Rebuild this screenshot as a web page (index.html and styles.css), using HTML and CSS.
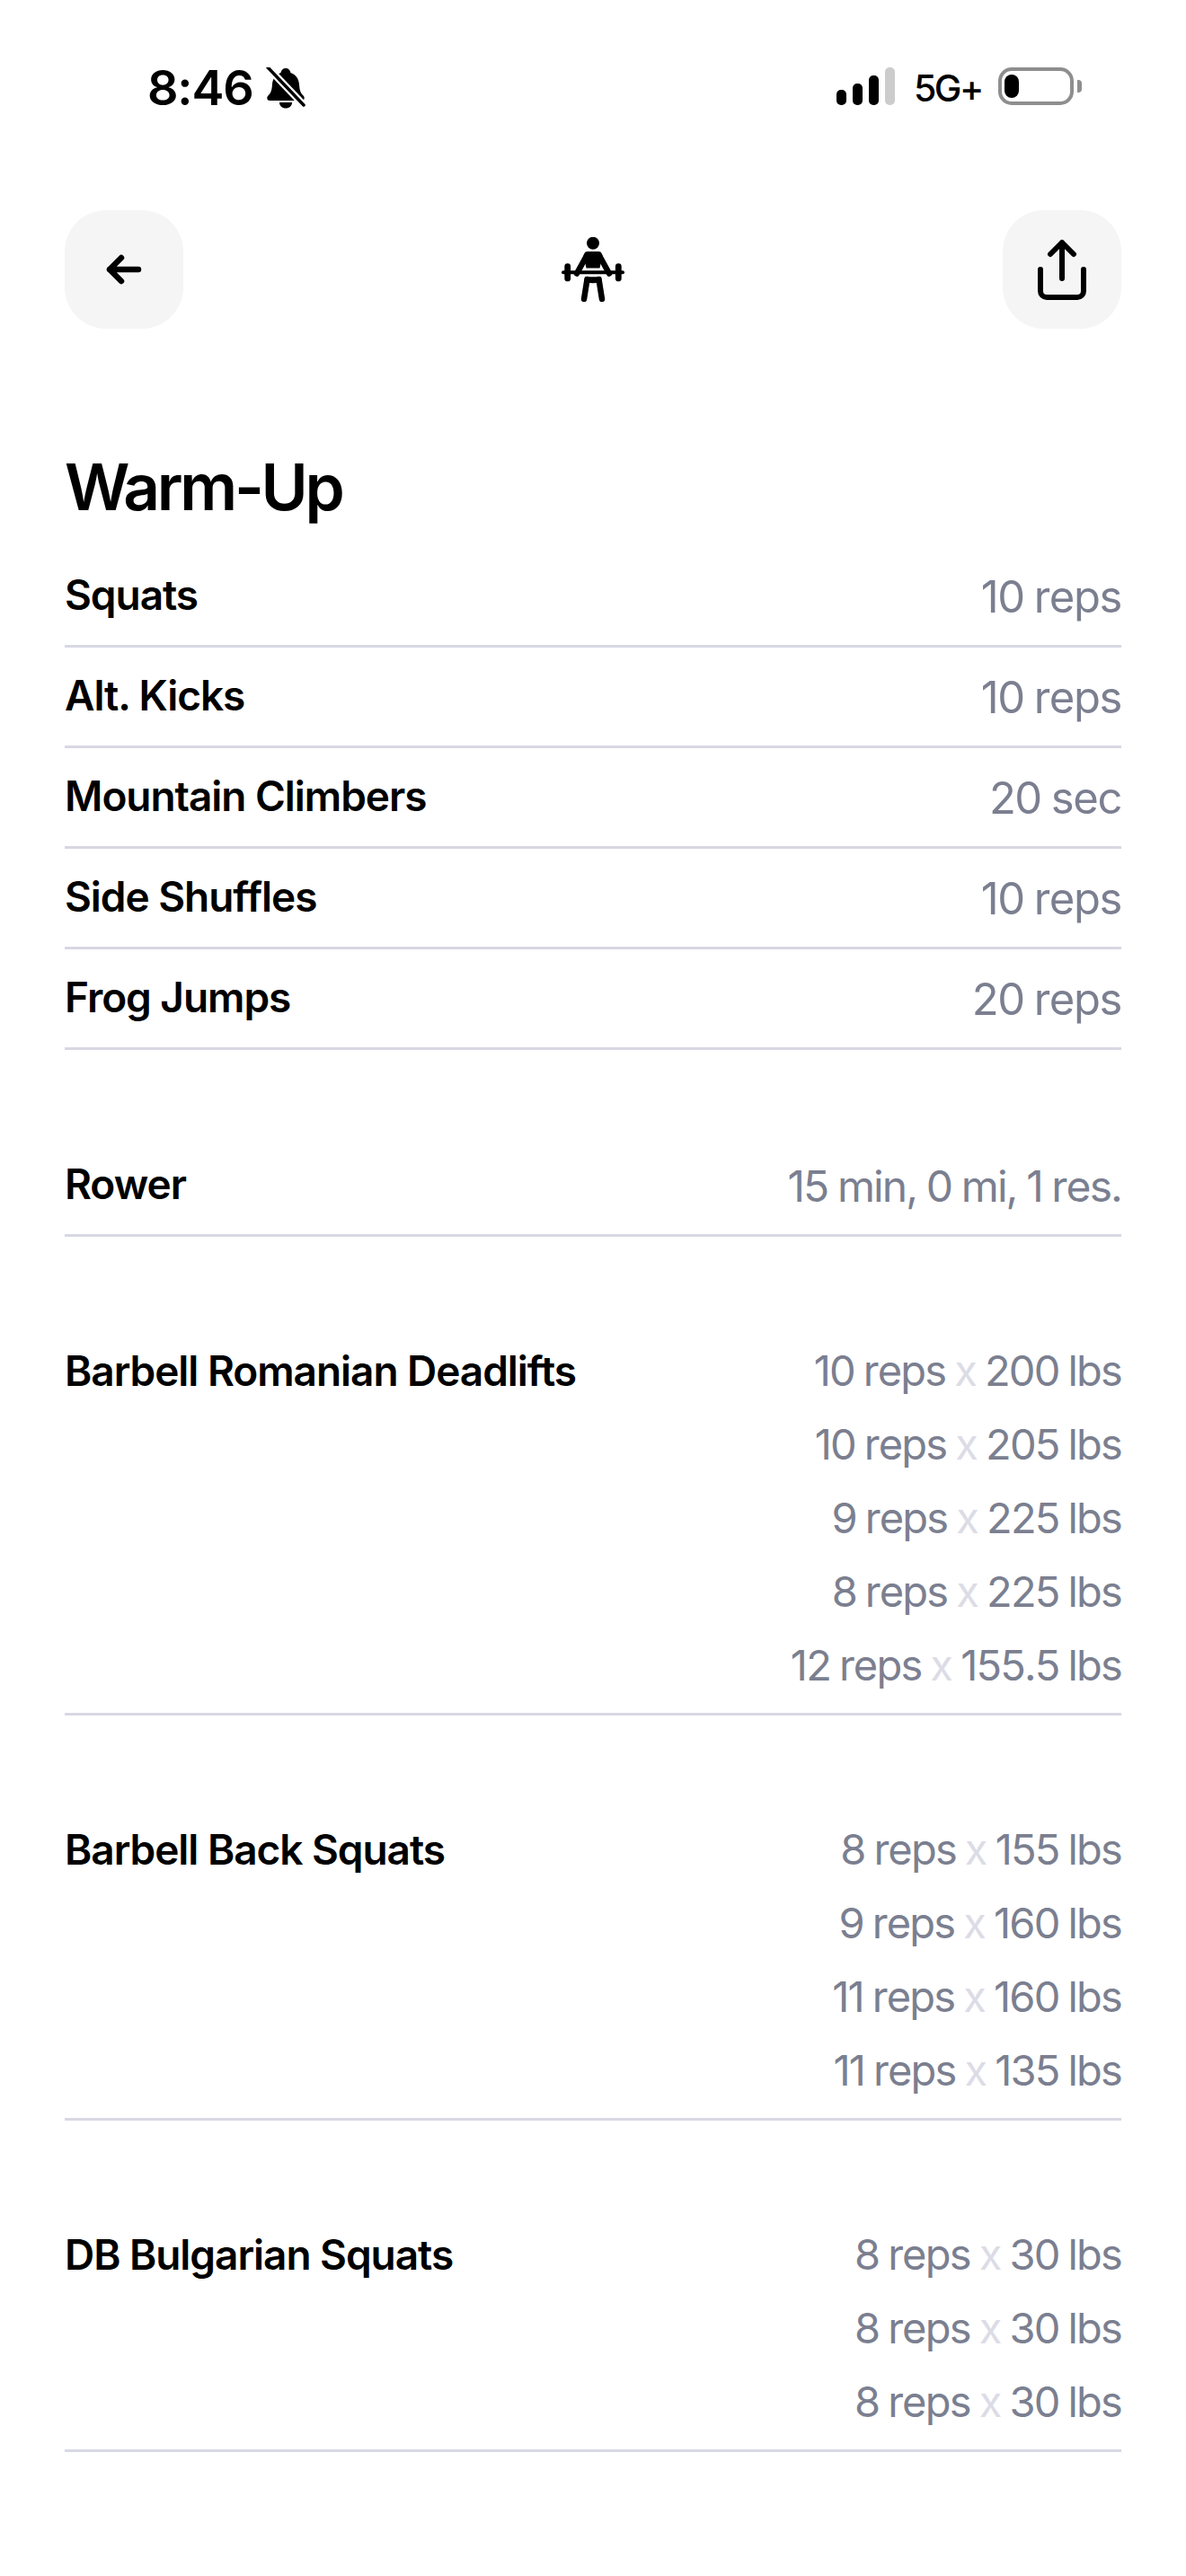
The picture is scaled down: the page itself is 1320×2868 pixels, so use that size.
FILE: index.html
```html
<!DOCTYPE html>
<html lang="en">
<head>
<meta charset="utf-8">
<title>Workout</title>
<link rel="stylesheet" href="styles.css">
</head>
<body>
<div class="status">
  <div class="status-left">
    <span class="time">8:46</span>
    <svg class="bell" viewBox="0 0 44 46" width="44" height="46">
      <path d="M22 1c3 0 5 2 5.500 5 6 2 9 7 9.500 13 .5 6 1 9 5 13 1.500 2 .5 5-2 5H4c-2.500 0-3.500-3-2-5 4-4 4.500-7 5-13 .3-6 3.500-11 9.500-13C17 3 19 1 22 1z" fill="#000"/>
      <path d="M15 39h14c0 4-3 6.500-7 6.500S15 43 15 39z" fill="#000"/>
      <path d="M2 0l42 44" stroke="#fff" stroke-width="8" fill="none"/>
      <path d="M2 0l40 42" stroke="#000" stroke-width="3.500" stroke-linecap="round" fill="none"/>
    </svg>
  </div>
  <div class="status-right">
    <div class="signal">
      <i class="bar b1"></i><i class="bar b2"></i><i class="bar b3"></i><i class="bar b4"></i>
    </div>
    <span class="net">5G+</span>
    <div class="battery"><div class="cell"></div></div>
    <div class="tip"></div>
  </div>
</div>

<nav class="nav">
  <button class="nav-btn" aria-label="Back">
    <svg viewBox="0 0 40 34" width="40" height="34"><path d="M4 17h32M17 4L4 17l13 13" fill="none" stroke="#000" stroke-width="6.500" stroke-linecap="round" stroke-linejoin="round"/></svg>
  </button>
  <svg class="lifter" viewBox="0 0 72 72" width="72" height="72">
    <circle cx="36" cy="6.700" r="7" fill="#000"/>
    <path d="M29.500 16h13c1.500 0 2.500.8 3 2l1 2.500-3 14H28.500l-3-14 1-2.500c.5-1.200 1.500-2 3-2z" fill="#000"/>
    <path d="M29 20.500L18 40.500M43 20.500L54 40.500" fill="none" stroke="#000" stroke-width="6.500" stroke-linecap="round"/>
    <rect x="1" y="37.300" width="70" height="4" rx="2" fill="#000"/>
    <rect x="4.300" y="29.300" width="6.800" height="20" rx="3.400" fill="#000"/>
    <rect x="60.900" y="29.300" width="6.800" height="20" rx="3.400" fill="#000"/>
    <path d="M27 44.300h18l1 6.500-10 .5-10-.5z" fill="#000"/>
    <path d="M29.500 47L26 69M42.500 47L46 69" fill="none" stroke="#000" stroke-width="6.500" stroke-linecap="round"/>
  </svg>
  <button class="nav-btn" aria-label="Share">
    <svg viewBox="0 0 56 68" width="56" height="68"><path d="M28 4v40M15 17L28 4l13 13" fill="none" stroke="#000" stroke-width="6" stroke-linecap="round" stroke-linejoin="round"/><path d="M4 34v24c0 4 3 7 7 7h34c4 0 7-3 7-7V34" fill="none" stroke="#000" stroke-width="6" stroke-linecap="round"/></svg>
  </button>
</nav>

<main class="content">
  <h1 class="title">Warm-Up</h1>
  <section class="group warm">
    <div class="row single"><div class="name">Squats</div><div class="vals"><div class="val">10 reps</div></div></div>
    <div class="row single"><div class="name">Alt. Kicks</div><div class="vals"><div class="val">10 reps</div></div></div>
    <div class="row single"><div class="name">Mountain Climbers</div><div class="vals"><div class="val">20 sec</div></div></div>
    <div class="row single"><div class="name">Side Shuffles</div><div class="vals"><div class="val">10 reps</div></div></div>
    <div class="row single"><div class="name">Frog Jumps</div><div class="vals"><div class="val">20 reps</div></div></div>
  </section>
  <section class="group">
    <div class="row single cardio"><div class="name">Rower</div><div class="vals"><div class="val">15 min, 0 mi, 1 res.</div></div></div>
  </section>
  <section class="group">
    <div class="row"><div class="name">Barbell Romanian Deadlifts</div><div class="vals">
      <div class="val">10 reps <span class="x">x</span> 200 lbs</div>
      <div class="val">10 reps <span class="x">x</span> 205 lbs</div>
      <div class="val">9 reps <span class="x">x</span> 225 lbs</div>
      <div class="val">8 reps <span class="x">x</span> 225 lbs</div>
      <div class="val">12 reps <span class="x">x</span> 155.5 lbs</div>
    </div></div>
  </section>
  <section class="group">
    <div class="row"><div class="name">Barbell Back Squats</div><div class="vals">
      <div class="val">8 reps <span class="x">x</span> 155 lbs</div>
      <div class="val">9 reps <span class="x">x</span> 160 lbs</div>
      <div class="val">11 reps <span class="x">x</span> 160 lbs</div>
      <div class="val">11 reps <span class="x">x</span> 135 lbs</div>
    </div></div>
  </section>
  <section class="group">
    <div class="row"><div class="name">DB Bulgarian Squats</div><div class="vals">
      <div class="val">8 reps <span class="x">x</span> 30 lbs</div>
      <div class="val">8 reps <span class="x">x</span> 30 lbs</div>
      <div class="val">8 reps <span class="x">x</span> 30 lbs</div>
    </div></div>
  </section>
</main>
</body>
</html>
```
FILE: styles.css
```css
* { box-sizing: border-box; }
html, body { margin: 0; padding: 0; background: #fff; }
body { width: 1320px; font-family: Inter, "Liberation Sans", sans-serif; color: #000; }

.status { height: 234px; padding: 75px 0 0 164px; display: flex; justify-content: space-between; align-items: flex-start; }
.status-left { display: flex; align-items: center; gap: 14px; height: 46px; }
.time { font-size: 54px; line-height: 46px; font-weight: 600; letter-spacing: -1.2px; }
.bell { display: block; }
.status-right { display: flex; align-items: flex-end; height: 42px; padding-right: 116px; }
.signal { display: flex; align-items: flex-end; gap: 7px; height: 42px; }
.bar { display: block; width: 11px; background: #000; border-radius: 5px; }
.b1 { height: 17px; }
.b2 { height: 24px; }
.b3 { height: 33px; }
.b4 { height: 42px; background: #ccc; }
.net { width: 74px; height: 42px; margin-left: 21px; font-size: 41px; line-height: 46px; font-weight: 500; letter-spacing: -2.500px; white-space: nowrap; }
.battery { width: 84px; height: 42px; margin-left: 20px; border: 4px solid #8e8e8e; border-radius: 15px; padding: 4px 3px; }
.cell { width: 16px; height: 26px; background: #000; border-radius: 8px; }
.tip { width: 5px; height: 14px; margin: 0 0 14px 4px; background: #8e8e8e; border-radius: 0 4px 4px 0; }

.nav { display: flex; justify-content: space-between; align-items: center; padding: 0 72px; height: 132px; }
.nav-btn { width: 132px; height: 132px; border: 0; padding: 0; background: #f5f5f5; border-radius: 46px; display: flex; align-items: center; justify-content: center; }
.lifter { display: block; }

.content { padding: 0 72px; }
.title { margin: 0; padding: 136px 0 27px; font-size: 71px; line-height: 80px; font-weight: 600; letter-spacing: -3.3px; }
.group { margin-top: 96px; }
.warm { margin-top: 0; }
.row { display: flex; justify-content: space-between; align-items: flex-start; padding: 12px 0 12px; border-bottom: 3px solid #d8d8e4; }
.name { font-size: 46px; line-height: 82px; font-weight: 600; letter-spacing: -1.05px; }
.vals { text-align: right; }
.val { font-size: 47px; line-height: 82px; color: #7b7f90; letter-spacing: -1.8px; word-spacing: -1.5px; white-space: nowrap; font-kerning: none; }
.x { color: #dcdce6; }
.single .vals { padding-top: 3px; }
.single .val { font-size: 49px; letter-spacing: -1.4px; }
.cardio .val { font-size: 48px; letter-spacing: -1.9px; word-spacing: -1px; }
```
